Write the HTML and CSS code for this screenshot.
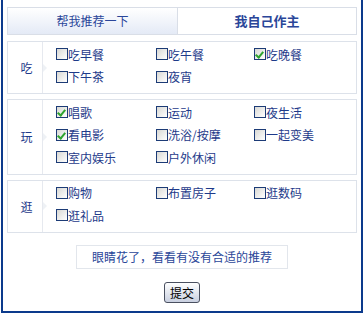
FILE: index.html
```
<!DOCTYPE html>
<html>
<head>
<meta charset="utf-8">
<link rel="stylesheet" href="styles.css">
</head>
<body>
<div class="frame">
  <div class="tabs">
    <div class="tab tab-off">帮我推荐一下</div>
    <div class="tab tab-on">我自己作主</div>
  </div>

  <div class="section">
    <div class="label">吃<span class="arrow"></span></div>
    <div class="items">
      <div class="item"><span class="cb"></span>吃早餐</div>
      <div class="item"><span class="cb"></span>吃午餐</div>
      <div class="item"><span class="cb on"></span>吃晚餐</div>
      <div class="item"><span class="cb"></span>下午茶</div>
      <div class="item"><span class="cb"></span>夜宵</div>
    </div>
  </div>

  <div class="section">
    <div class="label">玩<span class="arrow"></span></div>
    <div class="items">
      <div class="item"><span class="cb on"></span>唱歌</div>
      <div class="item"><span class="cb"></span>运动</div>
      <div class="item"><span class="cb"></span>夜生活</div>
      <div class="item"><span class="cb on"></span>看电影</div>
      <div class="item"><span class="cb"></span>洗浴/按摩</div>
      <div class="item"><span class="cb"></span>一起变美</div>
      <div class="item"><span class="cb"></span>室内娱乐</div>
      <div class="item"><span class="cb"></span>户外休闲</div>
    </div>
  </div>

  <div class="section">
    <div class="label">逛<span class="arrow"></span></div>
    <div class="items">
      <div class="item"><span class="cb"></span>购物</div>
      <div class="item"><span class="cb"></span>布置房子</div>
      <div class="item"><span class="cb"></span>逛数码</div>
      <div class="item"><span class="cb"></span>逛礼品</div>
    </div>
  </div>

  <div class="hint-wrap">
    <div class="hint">眼睛花了，看看有没有合适的推荐</div>
  </div>
  <div class="submit-wrap">
    <button class="submit">提交</button>
  </div>
</div>
</body>
</html>
```

FILE: styles.css
```
html, body {
  margin: 0;
  padding: 0;
  background: #fff;
}
body {
  width: 363px;
  height: 315px;
  overflow: hidden;
  font-family: "Noto Sans CJK SC", "Noto Sans", sans-serif;
  font-size: 12px;
  color: #1e3a8a;
}
.frame {
  box-sizing: border-box;
  margin-left: 1px;
  width: 362px;
  height: 313px;
  border: 2px solid #0c3a8c;
  border-top: none;
  padding: 7px 4px 0 4px;
}
.tabs {
  display: flex;
  height: 28px;
  box-sizing: border-box;
}
.tab {
  box-sizing: border-box;
  height: 28px;
  line-height: 26px;
  text-align: center;
  border: 1px solid #d9dee7;
  color: #2a4699;
  font-size: 12px;
}
.tab-off {
  width: 171px;
  background: linear-gradient(#ffffff, #e4eaf6);
}
.tab-on {
  width: 179px;
  border-left: none;
  background: #fff;
  font-weight: bold;
  font-size: 13px;
}
.section {
  display: flex;
  margin-top: 6px;
  width: 350px;
  box-sizing: border-box;
  border: 1px solid #dde2ea;
}
.section + .section {
  margin-top: 5px;
}
.label {
  position: relative;
  width: 35px;
  flex: none;
  border-right: 1px solid #e6e9ef;
  display: flex;
  align-items: center;
  justify-content: center;
  padding-left: 3px;
  box-sizing: border-box;
  font-size: 12px;
}
.arrow {
  position: absolute;
  right: -5px;
  top: 50%;
  margin-top: -4px;
  width: 0;
  height: 0;
  border-top: 4px solid transparent;
  border-bottom: 4px solid transparent;
  border-left: 4px solid #eef1f5;
}
.items {
  display: grid;
  grid-template-columns: 100px 98px 80px;
  grid-auto-rows: 22.5px;
  padding: 1px 0 5px 13px;
}
.item {
  display: flex;
  align-items: center;
  white-space: nowrap;
  font-size: 12px;
}
.cb {
  display: inline-block;
  box-sizing: border-box;
  width: 12px;
  height: 12px;
  border: 1px solid #1c3b76;
  background: linear-gradient(135deg, #d8d8d4, #ffffff);
  position: relative;
  flex: none;
}
.cb.on::after {
  content: "";
  position: absolute;
  left: 2px;
  top: 1px;
  width: 3px;
  height: 6px;
  border-right: 2px solid #2ea32e;
  border-bottom: 2px solid #2ea32e;
  transform: rotate(40deg);
}
.hint-wrap {
  display: flex;
  justify-content: center;
  margin-top: 12px;
}
.hint {
  box-sizing: border-box;
  width: 212px;
  height: 24px;
  line-height: 22px;
  border: 1px solid #e2e6ec;
  text-align: center;
  color: #2a4699;
}
.submit-wrap {
  display: flex;
  justify-content: center;
  margin-top: 13px;
}
.submit {
  box-sizing: border-box;
  width: 36px;
  height: 21px;
  padding: 0;
  border: 1px solid #4a5060;
  border-radius: 3px;
  background: linear-gradient(#ffffff, #c9d0e0);
  font-family: "Noto Sans CJK SC", sans-serif;
  font-size: 12px;
  line-height: 19px;
  color: #000;
}
```
